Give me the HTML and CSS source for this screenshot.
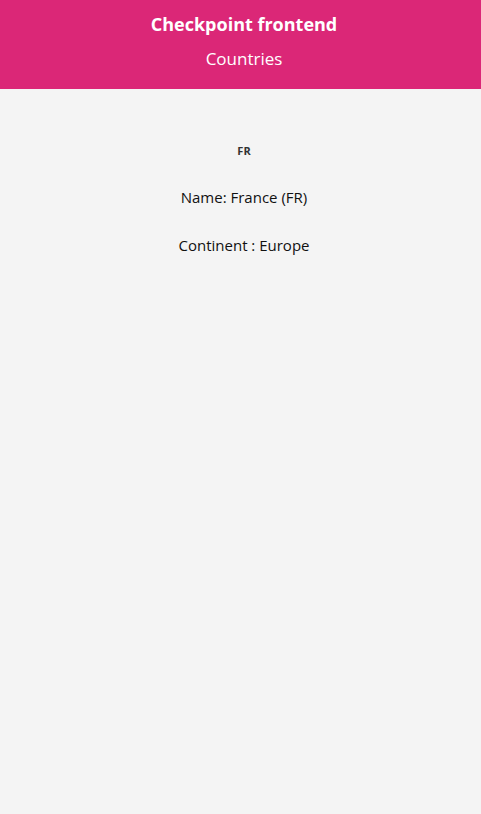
FILE: index.html
```html
<!DOCTYPE html>
<html>
<head>
<meta charset="utf-8">
<link rel="stylesheet" href="styles.css">
</head>
<body>
<header class="header">
  <h1 class="title">Checkpoint frontend</h1>
  <h2 class="subtitle">Countries</h2>
</header>
<main class="content">
  <p class="flag">FR</p>
  <p class="line">Name: France (FR)</p>
  <p class="line">Continent : Europe</p>
</main>
</body>
</html>
```
FILE: styles.css
```css
html, body {
  margin: 0;
  padding: 0;
  background: #f4f4f4;
  font-family: "Open Sans", "Noto Sans", sans-serif;
  color: #111;
}
.header {
  background: #db2777;
  color: #fff;
  height: 89px;
  display: flex;
  flex-direction: column;
  align-items: center;
  box-sizing: border-box;
  padding: 10px 0 0 7px;
}
.title {
  margin: 0;
  font-size: 18px;
  font-weight: 700;
  line-height: 28px;
}
.subtitle {
  margin: 9px 0 0;
  font-size: 17px;
  font-weight: 400;
  line-height: 24px;
}
.content {
  display: flex;
  flex-direction: column;
  align-items: center;
  padding: 54px 0 0 7px;
}
.flag {
  margin: 0;
  font-size: 11px;
  font-weight: 700;
  line-height: 16px;
  color: #333;
}
.line {
  margin: 0;
  font-size: 15px;
  line-height: 22px;
}
.flag + .line { margin-top: 27px; }
.line + .line { margin-top: 26px; }
```
